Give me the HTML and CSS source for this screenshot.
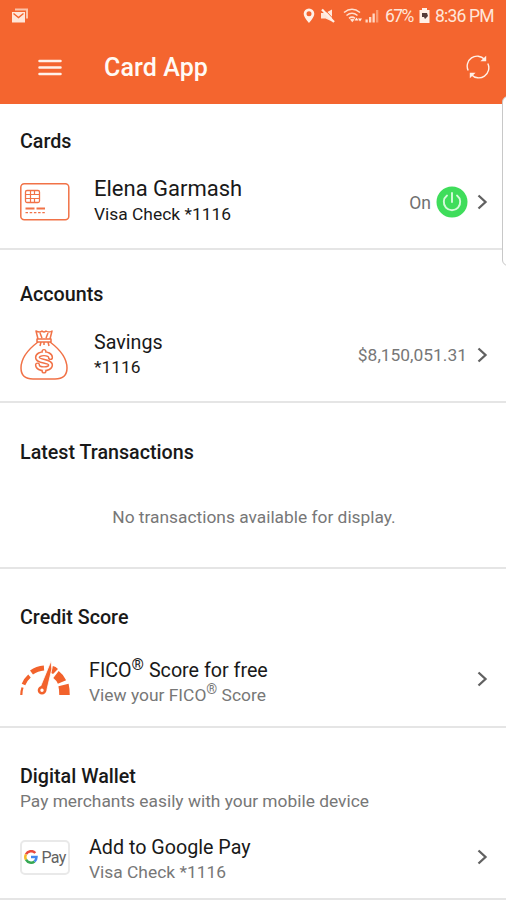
FILE: index.html
```html
<!DOCTYPE html>
<html lang="en">
<head>
<meta charset="utf-8">
<title>Card App</title>
<link rel="stylesheet" href="styles.css">
</head>
<body>
<header class="header">
  <div class="status">
    <svg class="mail" width="18" height="16" viewBox="0 0 18 16"><path d="M4 .5h13v10h-2v-8H4z" fill="#fbc3a9"/><path d="M1 4h13v10.500H1z" fill="#ffe6d9"/><path d="m2.500 5.500 5 4 5-4" fill="none" stroke="#f4652f" stroke-width="1.400"/></svg>
    <div class="status-right">
      <svg width="12" height="16" viewBox="0 0 12 16"><path fill="#fff0e7" fill-rule="evenodd" d="M6 .5A5.300 5.300 0 0 0 .7 5.800C.7 9.500 6 15 6 15s5.300-5.500 5.300-9.200A5.300 5.300 0 0 0 6 .5m0 2.800a2.500 2.500 0 1 1 0 5 2.500 2.500 0 0 1 0-5"/></svg>
      <svg class="mute" width="16" height="16" viewBox="0 0 16 16"><path d="M1 5h4.500l6.500-3.500v12L5.500 10.500H1z" fill="#ffe6d9"/><path d="m4 1 10.500 11" stroke="#f4652f" stroke-width="1"/><path d="m2 1.500 12 12.500" stroke="#fff0e7" stroke-width="2.200"/></svg>
      <svg class="wifi" width="20" height="16" viewBox="0 0 20 16"><g fill="none" stroke="#ffe0d0" stroke-width="1.600"><path d="M1 4.500q8-6.500 16 0M3.500 7.500q5.500-4.500 11 0M6 10.300q3-2.500 6 0"/></g><path d="m7 11.500 2.300 2.800 2.200-2.800q-2.200-1.700-4.500 0" fill="#ffe0d0"/><path d="m11.500 12.500 2-3 2 3zM15 10.500h4l-2 3z" fill="#fff0e7"/></svg>
      <svg class="signal" width="14" height="16" viewBox="0 0 14 16"><path d="M.5 14.500h2.300v-3H.5zM4 14.500h2.300V9H4zM7.500 14.500h2.300V5.500H7.500z" fill="#ffd7c3"/><path d="M11 14.500h2.300V2H11z" fill="#fa9b72"/></svg>
      <span class="percent">67%</span>
      <svg class="battery" width="11" height="16" viewBox="0 0 11 16"><path d="M3 0h5v2h2.500v13H.5V2H3z" fill="#fff0e7"/><path d="M3 5h5l1 3-3 3-1-2H3z" fill="#543b39"/></svg>
      <span class="time">8:36 PM</span>
    </div>
  </div>
  <div class="toolbar">
    <svg class="menu" width="24" height="18" viewBox="0 0 24 18"><path d="M1.500 2h21M1.500 8.500h21M1.500 15h21" stroke="#fff1e9" stroke-width="2.500" stroke-linecap="round"/></svg>
    <h1>Card App</h1>
    <svg class="refresh" width="24" height="24" viewBox="0 0 24 24"><g fill="none" stroke="#fff0e7" stroke-width="1.400"><path d="M2.200 15.500A10 10 0 0 1 18.500 4.300M21.800 8.500A10 10 0 0 1 5.500 19.700"/></g><path d="M20.200.8v5.500h-5.800zM3.800 23.200v-5.500h5.800z" fill="#fff0e7"/></svg>
  </div>
</header>
<main>
  <section class="section cards">
    <h2>Cards</h2>
    <div class="row">
      <svg class="icon" width="50" height="50" viewBox="0 0 50 50" fill="none" stroke="#f17247"><rect x=".8" y="6.700" width="48" height="36" rx="3.500" stroke-width="1.500"/><rect x="5.500" y="13.500" width="14" height="12" rx="1.500" stroke-width="1.300"/><path d="M5.500 17.500h5m-5 4h5m4-4h5m-5 4h5M10.500 13.500v12m4-12v4h-4m4 8v-4h-4" stroke-width="1.200"/><path d="M5.500 31.500h9m2 0h8.500" stroke-width="1.800"/><path d="M5.500 35.700H25" stroke-width="1.200" stroke-dasharray="2.500 1.700"/></svg>
      <div class="label"><div class="name">Elena Garmash</div><div class="sub">Visa Check *1116</div></div>
      <span class="on">On</span>
      <svg class="power" width="32" height="32" viewBox="0 0 32 32"><circle cx="16" cy="16" r="15.500" fill="#3fdd5b"/><path d="M11 9.500a8.200 8.200 0 1 0 10 0M16 7v9" fill="none" stroke="#d5fbdb" stroke-width="1.900" stroke-linecap="round"/></svg>
      <svg class="chevron" width="11" height="16" viewBox="0 0 11 16"><path d="m1.500 1.500 7 6.500-7 6.500"/></svg>
    </div>
  </section>
  <section class="section accounts">
    <h2>Accounts</h2>
    <div class="row">
      <svg class="icon" width="50" height="52" viewBox="0 0 50 52" fill="none" stroke="#f17247" stroke-width="1.500" stroke-linejoin="round"><path d="M18 13C10 19 1 28 1 39c0 7 4 11 12 11h22c8 0 12-4 12-11 0-11-9-20-17-26"/><path d="m18 10-2-8q4 2 6 0 2 2 4 0 3 2 6 0l-2 8M17 10h14v3H17zM20 4l2 5m6-5-2 5m-5 4-1 4m4-4v3m4-3 1 4"/><g stroke-linecap="round"><path d="M30.500 28.500c0-5-13-5-13 0 0 4.500 13 3 13 7.500 0 5-13 5-13 0M24 22.500v2m0 15.500v2" stroke-width="5.200"/><path d="M30.500 28.500c0-5-13-5-13 0 0 4.500 13 3 13 7.500 0 5-13 5-13 0M24 22.500v2m0 15.500v2" stroke="#fff" stroke-width="2.300"/></g></svg>
      <div class="label"><div class="name">Savings</div><div class="sub">*1116</div></div>
      <span class="amount">$8,150,051.31</span>
      <svg class="chevron" width="11" height="16" viewBox="0 0 11 16"><path d="m1.500 1.500 7 6.500-7 6.500"/></svg>
    </div>
  </section>
  <section class="section latest">
    <h2>Latest Transactions</h2>
    <p class="empty">No transactions available for display.</p>
  </section>
  <section class="section credit">
    <h2>Credit Score</h2>
    <div class="row">
      <svg class="icon" width="50" height="36" viewBox="0 0 50 36"><g fill="none" stroke="#f2622c"><path d="M1.300 34q0-4 1.200-7.500" stroke-width="2.200"/><path d="M3.500 23.500q2-5 6-8.500" stroke-width="3.800"/><path d="M11.500 11.500q5.500-4 12.500-4.500" stroke-width="5"/><path d="M32 8.500q2 .5 3.500 2" stroke-width="7"/><path d="M36 13.500q4 3 6 7.500" stroke-width="9"/><path d="M43.500 24q1 4 1 10" stroke-width="10.500"/></g><path d="m31 0 .8 8-5.300 22.500-7-2.500z" fill="#f2622c" stroke="#fff" stroke-width=".8"/><circle cx="22" cy="29.300" r="3" fill="#fff" stroke="#f2622c" stroke-width="2.600"/></svg>
      <div class="label"><div class="name">FICO<sup>®</sup> Score for free</div><div class="sub">View your FICO<sup>®</sup> Score</div></div>
      <svg class="chevron" width="11" height="16" viewBox="0 0 11 16"><path d="m1.500 1.500 7 6.500-7 6.500"/></svg>
    </div>
  </section>
  <section class="section wallet">
    <h2>Digital Wallet</h2>
    <p class="note">Pay merchants easily with your mobile device</p>
    <div class="row">
      <div class="gpay">
        <svg width="14" height="14" viewBox="0 0 14 14" fill="none" stroke-width="2.500"><path d="M11.300 3A5.700 5.700 0 0 0 2 4.300" stroke="#e94a3e"/><path d="M2 4.300a5.700 5.700 0 0 0 0 5.400" stroke="#f5bb29"/><path d="M2 9.700a5.700 5.700 0 0 0 8.500 1.700" stroke="#36a853"/><path d="M7 7h5.500q0 2.800-2 4.400" stroke="#4386ed"/></svg>
        <span>Pay</span>
      </div>
      <div class="label"><div class="name">Add to Google Pay</div><div class="sub">Visa Check *1116</div></div>
      <svg class="chevron" width="11" height="16" viewBox="0 0 11 16"><path d="m1.500 1.500 7 6.500-7 6.500"/></svg>
    </div>
  </section>
</main>
<div class="edge"></div>
</body>
</html>
```
FILE: styles.css
```css
* { box-sizing: border-box; }
body { margin: 0; width: 506px; height: 900px; overflow: hidden; position: relative; background: #fff; color: #191919; font-family: Roboto, "Liberation Sans", sans-serif; white-space: nowrap; }
svg { display: block; flex: none; }
h1, h2, p { margin: 0; }
.header { height: 104px; background: #f4652f; color: #ffe6d9; }
.status { height: 32px; display: flex; align-items: center; justify-content: space-between; padding: 0 12px 0 11px; }
.status-right { display: flex; align-items: center; font-size: 17.5px; line-height: 32px; }
.mute { margin-left: 5px; }
.wifi { margin-left: 7px; }
.signal { margin-left: 2px; }
.percent { margin-left: 6px; width: 29px; letter-spacing: -1.6px; }
.battery { margin-left: 5px; }
.time { margin-left: 5px; width: 59px; letter-spacing: -.8px; }
.toolbar { height: 72px; display: flex; align-items: center; padding: 0 16px 0 38px; }
h1 { font-size: 25px; line-height: 32px; font-weight: 500; margin: 0 auto 0 42px; letter-spacing: .1px; color: #fffaf5; }
.refresh { margin-top: -2px; }
.section { padding: 0 18px 0 20px; border-bottom: 2px solid #e5e5e5; }
h2 { font-size: 19.700px; line-height: 26px; height: 24px; font-weight: 500; }
.row { display: flex; align-items: center; height: 52px; }
.label { margin-left: 24px; margin-right: auto; }
.name { font-size: 19.700px; line-height: 25px; }
.sub { font-size: 17.400px; line-height: 25px; }
.cards { height: 146px; padding-top: 25px; }
.cards .row { margin-top: 23px; }
.cards .label { padding-bottom: 1px; }
.cards .name { font-size: 22px; line-height: 26px; }
.on { font-size: 17.500px; color: #707070; margin-right: 5px; padding-top: 2px; }
.power { margin-right: 9px; }
.chevron { fill: none; stroke: #616161; stroke-width: 2.300; }
.accounts { height: 153px; padding-top: 32px; }
.accounts .row { margin-top: 23px; }
.amount { font-size: 17.400px; color: #777; margin-right: 10px; }
.latest { height: 166px; padding-top: 37px; }
.empty { margin-top: 41px; text-align: center; font-size: 17.350px; line-height: 24px; color: #777; }
.credit { height: 159px; padding-top: 36px; }
.credit .row { margin-top: 24px; }
.credit .label, .wallet .label { margin-left: 19px; }
.credit .label { padding-top: 8px; }
.credit .sub, .wallet .sub { color: #777; }
sup { font-size: .8em; line-height: 0; vertical-align: 7px; }
.wallet { height: 172px; padding-top: 36px; }
.note { font-size: 17.350px; line-height: 24px; color: #777; margin-top: 1px; }
.wallet .row { margin-top: 18px; }
.wallet .label { padding-top: 6px; }
.gpay { width: 50px; height: 35px; border: 2px solid #e9e9e9; border-radius: 5px; display: flex; align-items: center; justify-content: center; gap: 3px; font-size: 16px; color: #626262; letter-spacing: -.7px; }
.edge { position: absolute; left: 502px; top: 96px; width: 12px; height: 170px; border: 1px solid #c8c8c8; border-radius: 6px; background: #fff; }
```
